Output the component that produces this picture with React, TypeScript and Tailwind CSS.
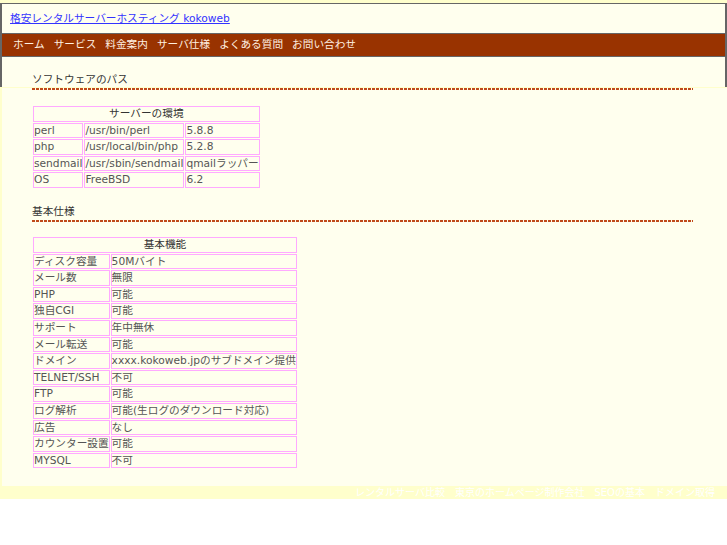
const software = [
  ["perl", "/usr/bin/perl", "5.8.8"],
  ["php", "/usr/local/bin/php", "5.2.8"],
  ["sendmail", "/usr/sbin/sendmail", "qmailラッパー"],
  ["OS", "FreeBSD", "6.2"],
];

const specs = [
  ["ディスク容量", "50Mバイト"],
  ["メール数", "無限"],
  ["PHP", "可能"],
  ["独自CGI", "可能"],
  ["サポート", "年中無休"],
  ["メール転送", "可能"],
  ["ドメイン", "xxxx.kokoweb.jpのサブドメイン提供"],
  ["TELNET/SSH", "不可"],
  ["FTP", "可能"],
  ["ログ解析", "可能(生ログのダウンロード対応)"],
  ["広告", "なし"],
  ["カウンター設置", "可能"],
  ["MYSQL", "不可"],
];

const nav = ["ホーム", "サービス", "料金案内", "サーバ仕様", "よくある質問", "お問い合わせ"];
const footerLinks = ["レンタルサーバ比較", "東京のホームページ制作会社", "SEOの基本", "ドメイン取得"];

const cell = "border border-[#ffaaff] p-0 leading-[13.6px] whitespace-nowrap";

function Dashed() {
  return (
    <div className="mt-[1px] h-[2px] bg-[repeating-linear-gradient(90deg,#c04a1a_0_3px,transparent_3px_4px)]" />
  );
}

export default function App() {
  return (
    <div className="min-h-screen bg-white font-['DejaVu_Sans','Noto_Sans_CJK_JP',sans-serif] text-[10.67px]">
      <div className="bg-[#ffffcc] pt-[3px]">
        <div className="border-x-2 border-t border-[#666] bg-[#ffffee]">
          <div className="flex h-[29px] items-center pl-[8px]">
            <a href="#" className="leading-[14px] text-[#3333ff] underline">
              格安レンタルサーバーホスティング kokoweb
            </a>
          </div>
          <nav className="flex h-[24px] items-center gap-[9px] border-y border-[#666] bg-[#993300] pl-[11px] leading-[14px] text-[#fff0e0]">
            {nav.map((n) => (
              <a key={n} href="#">
                {n}
              </a>
            ))}
          </nav>
          <div className="px-[30px] pt-[16px]">
            <h2 className="leading-[14px] text-[#333]">ソフトウェアのパス</h2>
          </div>
        </div>

        <main className="ml-[2px] bg-[#ffffee] pb-[17px] pl-[30px] pr-[34px] text-[#555]">
          <Dashed />
          <table className="mt-[15px] border-separate border-spacing-[1px]">
            <tbody>
              <tr>
                <td colSpan={3} className={`${cell} text-center text-[#333]`}>
                  サーバーの環境
                </td>
              </tr>
              {software.map((r) => (
                <tr key={r[0]}>
                  {r.map((c) => (
                    <td key={c} className={cell}>
                      {c}
                    </td>
                  ))}
                </tr>
              ))}
            </tbody>
          </table>

          <h2 className="mt-[16px] leading-[14px] text-[#333]">基本仕様</h2>
          <Dashed />
          <table className="mt-[14px] border-separate border-spacing-[1px]">
            <tbody>
              <tr>
                <td colSpan={2} className={`${cell} text-center text-[#333]`}>
                  基本機能
                </td>
              </tr>
              {specs.map((r) => (
                <tr key={r[0]}>
                  <td className={cell}>{r[0]}</td>
                  <td className={cell}>{r[1]}</td>
                </tr>
              ))}
            </tbody>
          </table>
        </main>

        <footer className="flex h-[13px] items-center justify-end gap-[10px] pr-[12px] text-[10px] leading-[13px] text-white">
          {footerLinks.map((f) => (
            <a key={f} href="#">
              {f}
            </a>
          ))}
        </footer>
      </div>
    </div>
  );
}
